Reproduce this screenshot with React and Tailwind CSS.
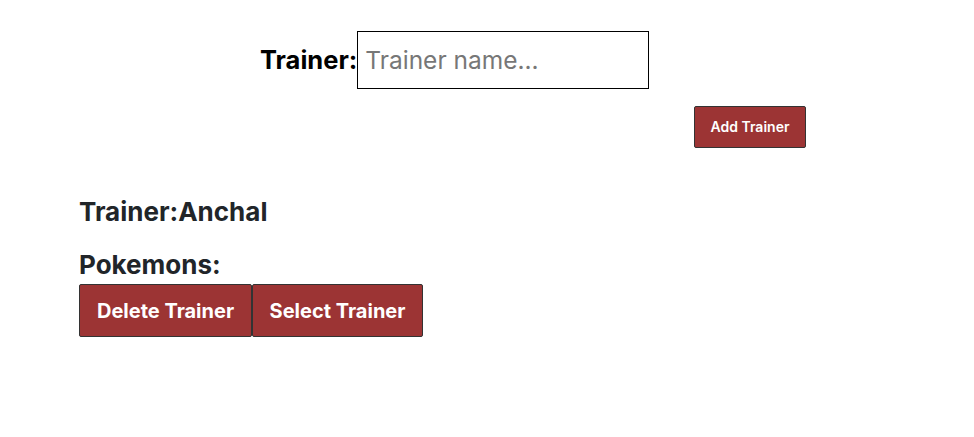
export default function App() {
  return (
    <div className="w-[974px] h-[437px] bg-white text-[#212529]" style={{ fontFamily: "Inter, 'Liberation Sans', sans-serif" }}>
      <div className="pt-[31px] pl-[260px] flex items-center">
        <span className="text-[25.5px] font-bold text-black leading-none">Trainer:</span>
        <input
          placeholder="Trainer name..."
          className="w-[292px] h-[58px] border border-black pl-[7px] pr-2 text-[24.5px] text-black placeholder:text-[#777] outline-none"
        />
      </div>
      <div className="mt-[17px] pl-[694px]">
        <button className="w-[112px] h-[42px] pb-px bg-[#9c3434] border border-[#333] rounded-[2px] text-white text-[14px] font-semibold">
          Add Trainer
        </button>
      </div>
      <div className="pl-[79px] mt-[48px]">
        <h3 className="text-[26px] font-bold leading-[32px]">Trainer:Anchal</h3>
        <h3 className="mt-[21px] text-[26px] font-bold leading-[32px]">Pokemons:</h3>
        <div className="flex mt-[3px]">
          <button className="w-[173px] h-[53px] bg-[#9c3434] border border-[#333] rounded-[2px] text-white text-[20px] font-bold">
            Delete Trainer
          </button>
          <button className="w-[171px] h-[53px] bg-[#9c3434] border border-[#333] rounded-[2px] text-white text-[20px] font-bold">
            Select Trainer
          </button>
        </div>
      </div>
    </div>
  );
}
